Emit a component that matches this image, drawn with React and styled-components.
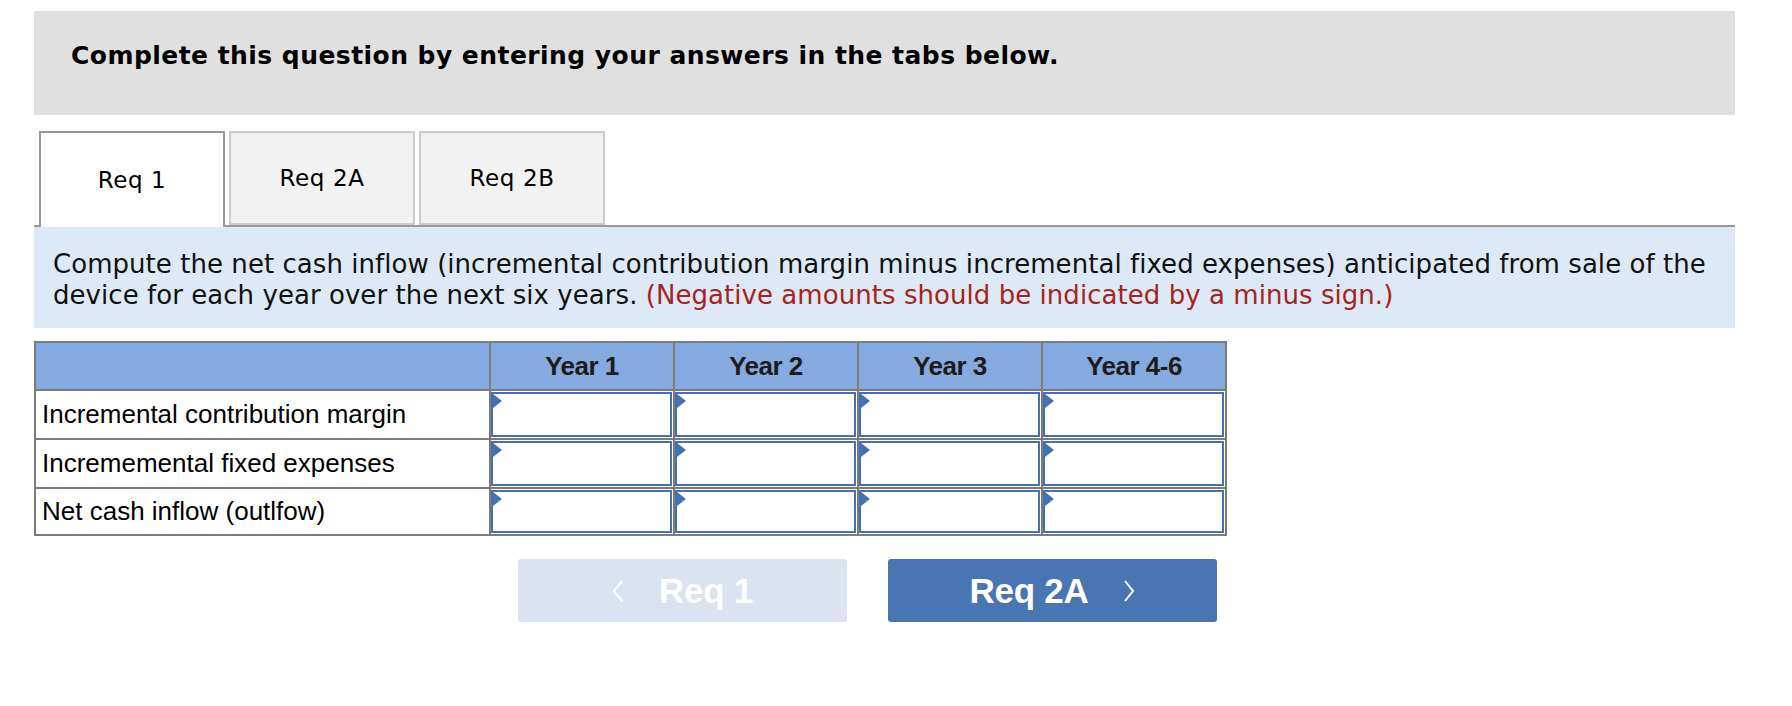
import React from "react";
import styled, { createGlobalStyle } from "styled-components";

const GlobalStyle = createGlobalStyle`
  html, body {
    margin: 0;
    padding: 0;
    background: #ffffff;
  }
`;

const years = ["Year 1", "Year 2", "Year 3", "Year 4-6"];
const rows = [
  { label: "Incremental contribution margin", height: 47 },
  { label: "Incrememental fixed expenses", height: 47 },
  { label: "Net cash inflow (outlfow)", height: 45 },
];

const App = () => {
  return (
    <Page>
      <GlobalStyle />
      <QuestionHeader>
        <h1>Complete this question by entering your answers in the tabs below.</h1>
      </QuestionHeader>

      <Tabs>
        <Tab active>Req 1</Tab>
        <Tab>Req 2A</Tab>
        <Tab>Req 2B</Tab>
      </Tabs>

      <Instructions>
        Compute the net cash inflow (incremental contribution margin minus
        incremental fixed expenses) anticipated from sale of the
        <br />
        device for each year over the next six years.{" "}
        <span className="note">(Negative amounts should be indicated by a minus sign.)</span>
      </Instructions>

      <AnswerTable>
        <HeadCell />
        {years.map((y) => (
          <HeadCell key={y}>{y}</HeadCell>
        ))}
        {rows.map((row) => (
          <React.Fragment key={row.label}>
            <LabelCell height={row.height}>{row.label}</LabelCell>
            {years.map((y) => (
              <InputCell key={y} height={row.height}>
                <AnswerInput type="text" />
              </InputCell>
            ))}
          </React.Fragment>
        ))}
      </AnswerTable>

      <NavRow>
        <NavButton disabled>
          <Chevron left />
          <span>Req 1</span>
        </NavButton>
        <NavButton>
          <span>Req 2A</span>
          <Chevron />
        </NavButton>
      </NavRow>
    </Page>
  );
};

const Chevron = ({ left }) => (
  <svg width="12" height="22" viewBox="0 0 12 22" xmlns="http://www.w3.org/2000/svg">
    <polyline
      points={left ? "10,1 2,11 10,21" : "2,1 10,11 2,21"}
      fill="none"
      stroke="#ffffff"
      strokeWidth="2"
    />
  </svg>
);

const Page = styled.div`
  width: 1701px;
  padding: 11px 0 0 34px;
`;

const QuestionHeader = styled.div`
  height: 104px;
  box-sizing: border-box;
  background: #e0e0e0;
  padding: 29px 37px 0;

  h1 {
    margin: 0;
    font-family: "DejaVu Sans", Verdana, sans-serif;
    font-weight: bold;
    font-size: 25px;
    letter-spacing: 0.45px;
    line-height: 32px;
    color: #000000;
  }
`;

const Tabs = styled.div`
  display: flex;
  gap: 4px;
  margin-top: 16px;
  padding-left: 5px;
  border-bottom: 2px solid #999999;
  height: 94px;
`;

const Tab = styled.div`
  width: 186px;
  box-sizing: border-box;
  height: ${(p) => (p.active ? "96px" : "94px")};
  display: flex;
  align-items: center;
  justify-content: center;
  font-family: "DejaVu Sans", Verdana, sans-serif;
  font-size: 23px;
  letter-spacing: 0.6px;
  color: #000000;
  background: ${(p) => (p.active ? "#ffffff" : "#f2f2f2")};
  border: 2px solid ${(p) => (p.active ? "#999999" : "#cccccc")};
  border-bottom: ${(p) => (p.active ? "none" : "2px solid #cccccc")};
  position: relative;
  z-index: 1;
`;

const Instructions = styled.div`
  background: #dde9f6;
  padding: 22px 19px 17px;
  font-family: "DejaVu Sans", Verdana, sans-serif;
  font-size: 26px;
  letter-spacing: 0.05px;
  line-height: 31px;
  white-space: nowrap;
  color: #111111;

  .note {
    color: #a8231c;
  }
`;

const AnswerTable = styled.div`
  margin-top: 13px;
  width: 1193px;
  box-sizing: border-box;
  display: grid;
  grid-template-columns: 453px repeat(4, 182px);
  gap: 2px;
  border: 2px solid #7b7b7b;
  background: #7b7b7b;
`;

const HeadCell = styled.div`
  height: 46px;
  background: #84aadf;
  display: flex;
  align-items: center;
  justify-content: center;
  font-family: "Liberation Sans", Arial, sans-serif;
  font-weight: bold;
  font-size: 26px;
  letter-spacing: -0.5px;
  color: #1c1c1c;
`;

const LabelCell = styled.div`
  height: ${(p) => p.height}px;
  background: #ffffff;
  display: flex;
  align-items: center;
  padding-left: 6px;
  font-family: "Liberation Sans", Arial, sans-serif;
  font-size: 26px;
  color: #000000;
`;

const InputCell = styled.div`
  height: ${(p) => p.height}px;
  box-sizing: border-box;
  background: #ffffff;
  padding: 1px 1px 1px 0;
  position: relative;

  &::before {
    content: "";
    position: absolute;
    left: 2px;
    top: 3px;
    border-left: 9px solid #4670b2;
    border-top: 7px solid transparent;
    border-bottom: 7px solid transparent;
  }
`;

const AnswerInput = styled.input`
  display: block;
  width: 100%;
  height: 100%;
  box-sizing: border-box;
  border: 2.5px solid #4670b2;
  margin: 0;
  padding: 0 8px;
  background: transparent;
  font-family: "Liberation Sans", Arial, sans-serif;
  font-size: 24px;
  outline: none;
`;

const NavRow = styled.div`
  display: flex;
  gap: 41px;
  margin-top: 23px;
  padding-left: 484px;
`;

const NavButton = styled.button`
  width: 329px;
  height: 63px;
  border: none;
  border-radius: 3px;
  background: ${(p) => (p.disabled ? "#dae3ef" : "#4a75b3")};
  color: #ffffff;
  display: flex;
  align-items: center;
  justify-content: center;
  gap: 35px;
  padding: 0;
  font-family: "Liberation Sans", Arial, sans-serif;
  font-weight: bold;
  font-size: 35px;
  letter-spacing: -0.3px;
  cursor: ${(p) => (p.disabled ? "default" : "pointer")};

  span {
    display: block;
  }
`;

export default App;
